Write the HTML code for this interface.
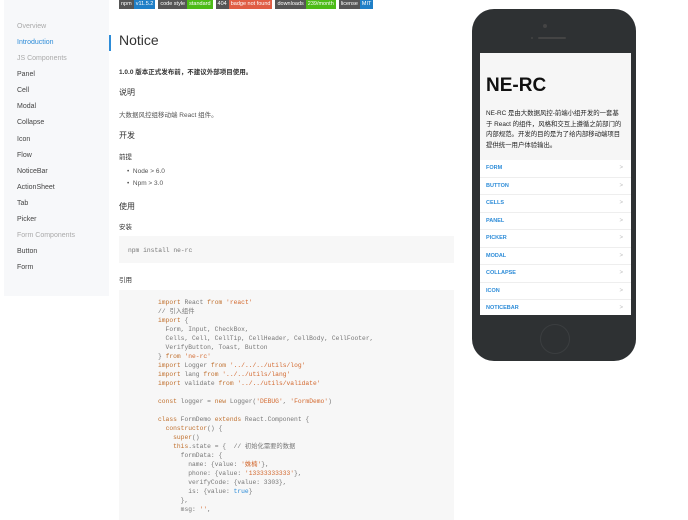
<!DOCTYPE html>
<html><head><meta charset="utf-8">
<style>
*{margin:0;padding:0;box-sizing:border-box}
body{width:688px;height:512px;overflow:hidden;background:#fff;font-family:"Liberation Sans","Noto Sans CJK SC",sans-serif;color:#333;position:relative}
.abs{position:absolute}
.side{left:4px;top:0;width:105px;height:296px;background:#f7f8fa}
.side div{position:absolute;left:13px;font-size:7px;color:#444;white-space:nowrap}
.side .g{color:#aaa}
.side .a{color:#2d8cd8}
.badges{left:119px;top:0;height:9px;display:flex;gap:3px;font-size:5.5px;line-height:9px;color:#fff}
.badges span{display:inline-block;padding:0 2px}
.d{background:#555}
h1{position:absolute;left:119px;top:32px;font-size:14px;font-weight:normal;color:#333}
.t{position:absolute;left:119px;white-space:nowrap}
.code{position:absolute;left:119px;width:335px;background:#f7f7f7;font-family:"Liberation Mono","Noto Sans CJK SC",monospace;font-size:6.3px;color:#777;white-space:pre;line-height:9px}
.k{color:#c0702e}.s{color:#d3692f}.b{color:#2d8cd8}
.phone{left:472px;top:9px;width:164px;height:352px;background:#2e3133;border-radius:22px}
.screen{left:480px;top:53px;width:151px;height:262px;background:#fff;overflow:hidden}
.li{position:absolute;left:0;width:151px;height:17.5px;border-bottom:1px solid #eee;font-size:5.5px;color:#2d8cd8;font-weight:bold;padding-left:6px;line-height:17px}
.li:after{content:">";position:absolute;right:8px;color:#bbb;font-weight:normal;font-size:6px}
</style></head><body>
<div class="abs side">
<div class="g" style="top:23px">Overview</div>
<div class="a" style="top:39px">Introduction</div>
<div class="g" style="top:55px">JS Components</div>
<div style="top:71px">Panel</div>
<div style="top:87px">Cell</div>
<div style="top:103px">Modal</div>
<div style="top:119px">Collapse</div>
<div style="top:136px">Icon</div>
<div style="top:152px">Flow</div>
<div style="top:168px">NoticeBar</div>
<div style="top:184px">ActionSheet</div>
<div style="top:200px">Tab</div>
<div style="top:216px">Picker</div>
<div class="g" style="top:232px">Form Components</div>
<div style="top:248px">Button</div>
<div style="top:264px">Form</div>
</div>
<div class="abs" style="left:109px;top:35px;width:1.5px;height:16px;background:#2d8cd8"></div>
<div class="abs badges">
<span style="padding:0"><span class="d">npm</span><span style="background:#1f7fc7">v11.5.2</span></span>
<span style="padding:0"><span class="d">code style</span><span style="background:#4cbb17">standard</span></span>
<span style="padding:0"><span class="d">404</span><span style="background:#e05d44">badge not found</span></span>
<span style="padding:0"><span class="d">downloads</span><span style="background:#4cbb17">239/month</span></span>
<span style="padding:0"><span class="d">license</span><span style="background:#1f7fc7">MIT</span></span>
</div>
<h1>Notice</h1>
<div class="t" style="top:66px;font-size:6.5px;font-weight:bold">1.0.0 版本正式发布前，不建议外部项目使用。</div>
<div class="t" style="top:87px;font-size:8px">说明</div>
<div class="t" style="top:109px;font-size:6.5px;color:#555">大数据风控组移动端 React 组件。</div>
<div class="t" style="top:130px;font-size:8px">开发</div>
<div class="t" style="top:151px;font-size:6.5px">前提</div>
<div class="t" style="top:168px;left:127px;font-size:6.5px;color:#555">•&nbsp; Node &gt; 6.0</div>
<div class="t" style="top:180px;left:127px;font-size:6.5px;color:#555">•&nbsp; Npm &gt; 3.0</div>
<div class="t" style="top:201px;font-size:8px">使用</div>
<div class="t" style="top:221px;font-size:6.5px">安装</div>
<div class="code" style="top:236px;height:27px;padding:10px 9px">npm install ne-rc</div>
<div class="t" style="top:274px;font-size:6.5px">引用</div>
<div class="code" style="top:290px;height:230px;padding:8px 0 0 39px"><span class="k">import</span> React <span class="k">from</span> <span class="s">'react'</span>
// 引入组件
<span class="k">import</span> {
  Form, Input, CheckBox,
  Cells, Cell, CellTip, CellHeader, CellBody, CellFooter,
  VerifyButton, Toast, Button
} <span class="k">from</span> <span class="s">'ne-rc'</span>
<span class="k">import</span> Logger <span class="k">from</span> <span class="s">'../../../utils/log'</span>
<span class="k">import</span> lang <span class="k">from</span> <span class="s">'../../utils/lang'</span>
<span class="k">import</span> validate <span class="k">from</span> <span class="s">'../../utils/validate'</span>

<span class="k">const</span> logger = <span class="k">new</span> Logger(<span class="s">'DEBUG'</span>, <span class="s">'FormDemo'</span>)

<span class="k">class</span> FormDemo <span class="k">extends</span> React.Component {
  <span class="k">constructor</span>() {
    <span class="k">super</span>()
    <span class="k">this</span>.state = {  // 初始化需要的数据
      formData: {
        name: {value: <span class="s">'姝楠'</span>},
        phone: {value: <span class="s">'13333333333'</span>},
        verifyCode: {value: 3303},
        is: {value: <span class="b">true</span>}
      },
      msg: <span class="s">''</span>,</div>
<div class="abs phone"></div>
<div class="abs" style="left:543px;top:24px;width:4px;height:4px;border-radius:50%;background:#444"></div>
<div class="abs" style="left:538px;top:37px;width:28px;height:2px;border-radius:1px;background:#444"></div>
<div class="abs" style="left:531px;top:37px;width:2px;height:2px;border-radius:1px;background:#444"></div>
<div class="abs" style="left:540px;top:324px;width:30px;height:30px;border-radius:50%;border:1px solid #3b3e40"></div>
<div class="abs screen">
<div class="abs" style="left:0;top:0;width:151px;height:107px;background:#f6f6f6"></div>
<div class="abs" style="left:6px;top:22px;font-size:19px;font-weight:bold;color:#111">NE-RC</div>
<div class="abs" style="left:6px;top:56px;width:138px;font-size:6.4px;line-height:10.5px;color:#222">NE-RC 是由大数据风控-前端小组开发的一套基于 React 的组件，风格和交互上遵循之前部门的内部规范。开发的目的是为了给内部移动端项目提供统一用户体验输出。</div>
<div class="li" style="top:107px">FORM</div>
<div class="li" style="top:124.5px">BUTTON</div>
<div class="li" style="top:142px">CELLS</div>
<div class="li" style="top:159.5px">PANEL</div>
<div class="li" style="top:177px">PICKER</div>
<div class="li" style="top:194.5px">MODAL</div>
<div class="li" style="top:212px">COLLAPSE</div>
<div class="li" style="top:229.5px">ICON</div>
<div class="li" style="top:247px">NOTICEBAR</div>
</div>
</body></html>
